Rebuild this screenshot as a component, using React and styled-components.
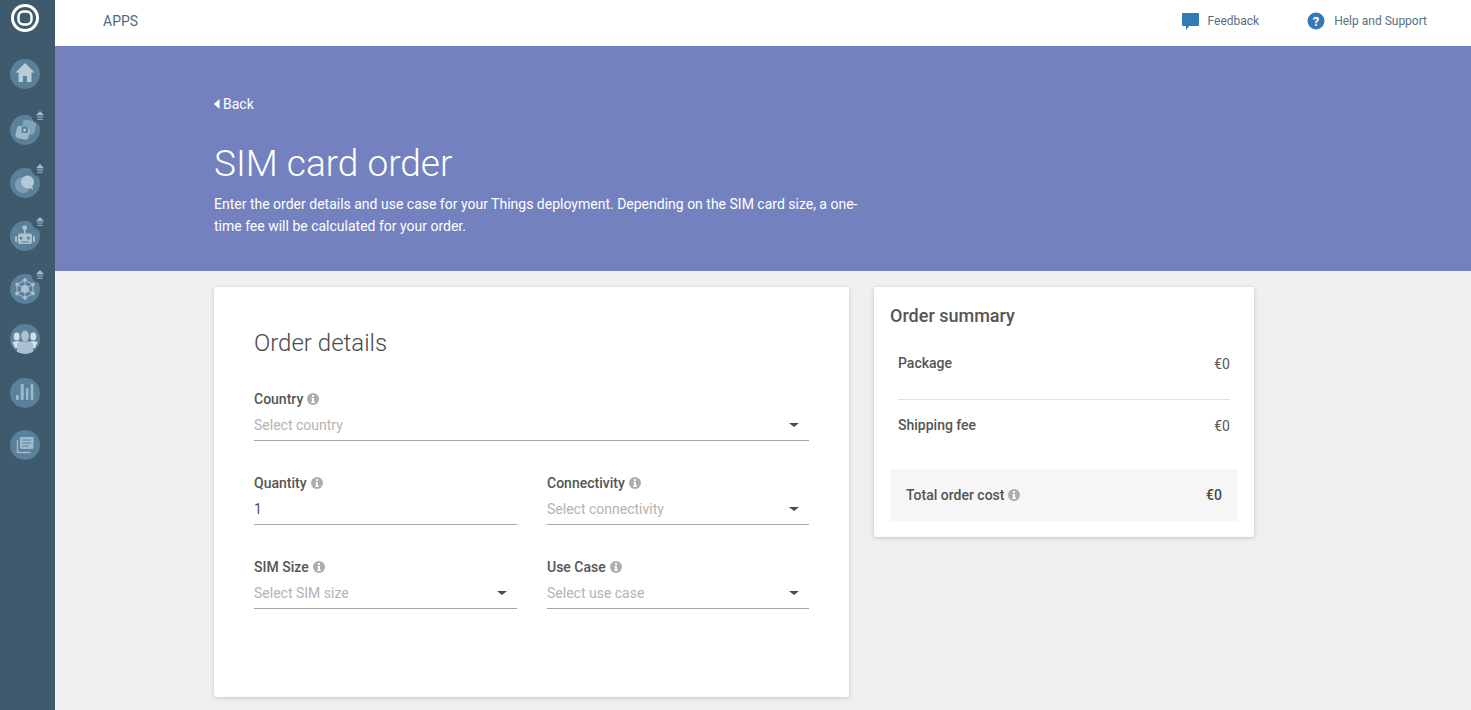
import React from "react";
import styled, { createGlobalStyle } from "styled-components";

const GlobalStyle = createGlobalStyle`
	html, body {
		margin: 0;
		padding: 0;
		height: 100%;
		background: #efefef;
		font-family: Roboto, "Liberation Sans", sans-serif;
		overflow: hidden;
	}
`;

const Page = styled.div`
	display: flex;
	width: 1471px;
	height: 710px;
	overflow: hidden;
`;

const Sidebar = styled.nav`
	width: 55px;
	flex: none;
	background: #3e5a6c;
	display: flex;
	flex-direction: column;
	align-items: flex-start;
	padding: 3px 0 0 10px;
	box-sizing: border-box;
`;

const Logo = styled.div`
	width: 30px;
	height: 30px;
	margin-bottom: 26px;
`;

const NavItem = styled.div`
	position: relative;
	width: 30px;
	height: 30px;
	margin-top: ${(p) => p.$top}px;
`;

const NavCircle = styled.div`
	width: 30px;
	height: 30px;
	border-radius: 50%;
	background: #5b809a;
	overflow: hidden;
`;

const Notch = styled.div`
	position: absolute;
	top: -9px;
	right: -9px;
	width: 18px;
	height: 18px;
	border-radius: 50%;
	background: #3e5a6c;
	display: flex;
	align-items: center;
	justify-content: center;
	color: #a3bdcc;
`;

const Main = styled.div`
	flex: 1;
	display: flex;
	flex-direction: column;
	min-width: 0;
`;

const TopBar = styled.header`
	height: 46px;
	flex: none;
	background: #fff;
	display: flex;
	align-items: center;
	padding: 0 44px 0 48px;
`;

const AppsLabel = styled.div`
	font-size: 14px;
	color: #4f6a7c;
	flex: 1;
	margin-top: -5px;
`;

const TopLink = styled.div`
	display: flex;
	align-items: center;
	gap: 9px;
	font-size: 12px;
	color: #55707f;
	margin-left: 48px;
	margin-top: -4px;
`;

const Hero = styled.section`
	height: 225px;
	flex: none;
	box-sizing: border-box;
	background: #7382bf;
	color: #fff;
	padding: 49px 0 0 159px;
`;

const BackLink = styled.div`
	display: flex;
	align-items: center;
	gap: 3px;
	font-size: 14px;
	line-height: 18px;
`;

const HeroTitle = styled.h1`
	margin: 29px 0 0;
	font-size: 37px;
	line-height: 44px;
	font-weight: 300;
`;

const HeroText = styled.p`
	margin: 7px 0 0;
	width: 650px;
	font-size: 14px;
	line-height: 22px;
`;

const Content = styled.div`
	display: flex;
	align-items: flex-start;
	gap: 25px;
	padding: 16px 0 0 159px;
`;

const Card = styled.div`
	background: #fff;
	border-radius: 2px;
	box-shadow: 0 1px 4px rgba(0, 0, 0, 0.18);
	box-sizing: border-box;
`;

const DetailsCard = styled(Card)`
	width: 635px;
	height: 410px;
	padding: 41px 40px 0;
`;

const DetailsTitle = styled.h2`
	margin: 0 0 33px;
	font-size: 24px;
	line-height: 30px;
	font-weight: 300;
	color: #4a4a4a;
`;

const FormGrid = styled.div`
	display: grid;
	grid-template-columns: 263px 262px;
	column-gap: 30px;
	row-gap: 34px;
`;

const Field = styled.div`
	grid-column: ${(p) => (p.$wide ? "1 / -1" : "auto")};
`;

const FieldLabel = styled.div`
	display: flex;
	align-items: center;
	gap: 4px;
	font-size: 14px;
	line-height: 16px;
	font-weight: 500;
	color: #555;
`;

const InputLine = styled.div`
	display: flex;
	align-items: center;
	justify-content: space-between;
	height: 34px;
	padding-top: 2px;
	box-sizing: border-box;
	border-bottom: 1px solid #a6a6a6;
	font-size: 14px;
	color: ${(p) => (p.$filled ? "#4d4d80" : "#b3b3b3")};
`;

const Caret = styled.span`
	width: 0;
	height: 0;
	margin-right: 10px;
	border-left: 5px solid transparent;
	border-right: 5px solid transparent;
	border-top: 4px solid #4a4a4a;
`;

const SummaryCard = styled(Card)`
	width: 380px;
	height: 250px;
	padding: 17px 16px 16px;
`;

const SummaryTitle = styled.h3`
	margin: 0 0 27px;
	font-size: 18px;
	line-height: 24px;
	font-weight: 500;
	color: #555;
`;

const SummaryRow = styled.div`
	display: flex;
	justify-content: space-between;
	margin: 0 8px;
	padding-bottom: ${(p) => p.$pad}px;
	border-bottom: ${(p) => (p.$divider ? "1px solid #e3e3e3" : "none")};
	margin-bottom: ${(p) => p.$gap}px;
	font-size: 14px;
	line-height: 16px;
	font-weight: 500;
	color: #555;
`;

const SummaryValue = styled.span`
	font-weight: 400;
	margin-top: 1px;
`;

const TotalRow = styled.div`
	display: flex;
	align-items: center;
	justify-content: space-between;
	height: 52px;
	padding: 0 16px;
	background: #f6f6f6;
	font-size: 14px;
	font-weight: 500;
	color: #4a4a4a;
`;

const TotalLabel = styled.span`
	display: flex;
	align-items: center;
	gap: 4px;
	color: #555;
`;

const InfoIcon = () => (
	<svg width="12" height="12" viewBox="0 0 12 12" style={{ flex: "none" }}>
		<circle cx="6" cy="6" r="6" fill="#adadad" />
		<rect x="5" y="2" width="2" height="2" fill="#fff" />
		<path d="M4.5 5h2.5v3.6h.7V10H4.4V8.6H5V6.2h-.5z" fill="#fff" />
	</svg>
);

const HomeGlyph = () => (
	<svg width="30" height="30" viewBox="0 0 30 30" fill="#b8cdd9">
		<path d="M15 4 5.500 13.500H8.500V23H13V17h4v6h4.500V13.500H24.500z" />
	</svg>
);

const SimGlyph = () => (
	<svg width="30" height="30" viewBox="0 0 30 30">
		<rect x="12" y="5.500" width="13.500" height="13.500" rx="3.500" transform="rotate(12 18.750 12.250)" fill="#7fa3b9" />
		<rect x="6" y="11.500" width="13.500" height="12.500" rx="3.500" transform="rotate(12 12.750 17.750)" fill="#9dbacb" />
		<rect x="11.500" y="11.500" width="6.500" height="6.500" rx="1.500" fill="#5b809a" />
		<circle cx="14.700" cy="15" r="1.500" fill="#b4c9d6" />
	</svg>
);

const ChatGlyph = () => (
	<svg width="30" height="30" viewBox="0 0 30 30">
		<circle cx="13" cy="17" r="8" fill="#7d9fb4" />
		<circle cx="17.500" cy="14" r="6.500" fill="#b4c9d6" />
		<path d="M19 19l4 3-1-5z" fill="#b4c9d6" />
	</svg>
);

const RobotGlyph = () => (
	<svg width="30" height="30" viewBox="0 0 30 30" fill="#a9c3d2">
		<circle cx="14.700" cy="6.700" r="2.400" />
		<rect x="13.900" y="8" width="1.600" height="5" />
		<rect x="8" y="12.500" width="14" height="10.500" rx="2" />
		<rect x="5" y="15" width="2" height="6" rx="1" />
		<rect x="23" y="15" width="2" height="6" rx="1" />
		<circle cx="11" cy="17" r="1.500" fill="#5b809a" />
		<circle cx="18.500" cy="17" r="1.500" fill="#5b809a" />
		<rect x="11" y="20.500" width="8" height="1" fill="#5b809a" />
	</svg>
);

const MeshGlyph = () => (
	<svg width="30" height="30" viewBox="0 0 30 30" stroke="#a9c1d0" strokeWidth="1" fill="#a9c1d0">
		<path d="M15 6 23 10.500V19.500L15 24 7 19.500V10.500Z M15 6V12 M15 18V24 M7 10.500 12 13 M23 10.500 18 13 M7 19.500 12 17 M23 19.500 18 17" fill="none" />
		<circle cx="15" cy="15" r="3.600" />
		<circle cx="15" cy="6" r="1.400" />
		<circle cx="23" cy="10.500" r="1.400" />
		<circle cx="23" cy="19.500" r="1.400" />
		<circle cx="15" cy="24" r="1.400" />
		<circle cx="7" cy="19.500" r="1.400" />
		<circle cx="7" cy="10.500" r="1.400" />
	</svg>
);

const PeopleGlyph = () => (
	<svg width="30" height="30" viewBox="0 0 30 30">
		<g fill="#d3e0e8">
			<ellipse cx="6.700" cy="12.500" rx="3" ry="4" />
			<ellipse cx="23.300" cy="12.500" rx="3" ry="4" />
			<path d="M2.300 18c2-1 7-1.200 8.700 0v6H5z" />
			<path d="M27.700 18c-2-1-7-1.200-8.700 0v6h6z" />
		</g>
		<g fill="#a9c1d0">
			<ellipse cx="15" cy="12" rx="4" ry="5.500" />
			<path d="M7 21c0-2.500 3-3.500 8-3.500s8 1 8 3.500v9H7z" />
		</g>
	</svg>
);

const BarsGlyph = () => (
	<svg width="30" height="30" viewBox="0 0 30 30" fill="#9dbacb">
		<rect x="6" y="17" width="2.700" height="5" rx="1" />
		<rect x="10.700" y="6" width="3" height="16" rx="1" />
		<rect x="16" y="10" width="2.400" height="12" rx="1" />
		<rect x="20.700" y="6" width="2.600" height="16" rx="1" />
	</svg>
);

const NewsGlyph = () => (
	<svg width="30" height="30" viewBox="0 0 30 30">
		<path d="M7.500 10v12.500h13" fill="none" stroke="#9dbacb" strokeWidth="1.500" />
		<rect x="10" y="7" width="13.500" height="12" rx="1.200" fill="#9dbacb" />
		<path d="M12.500 10h8.500M12.500 13h8.500M12.500 16h6" stroke="#5b809a" strokeWidth="1.200" />
	</svg>
);

const UploadGlyph = () => (
	<svg width="8" height="9" viewBox="0 0 8 9" fill="currentColor">
		<path d="M4 0 8 4.200H0z" />
		<rect x="1" y="5.400" width="6" height="1" />
		<rect x="1.500" y="7.800" width="5" height="1" />
	</svg>
);

const navItems = [
	{ glyph: <HomeGlyph />, top: 0 },
	{ glyph: <SimGlyph />, top: 26, notch: true },
	{ glyph: <ChatGlyph />, top: 23, notch: true },
	{ glyph: <RobotGlyph />, top: 23, notch: true },
	{ glyph: <MeshGlyph />, top: 23, notch: true },
	{ glyph: <PeopleGlyph />, top: 20 },
	{ glyph: <BarsGlyph />, top: 24 },
	{ glyph: <NewsGlyph />, top: 22 },
];

function App() {
	return (
		<Page>
			<GlobalStyle />
			<Sidebar>
				<Logo>
					<svg width="30" height="30" viewBox="0 0 30 30" fill="none" stroke="#fff">
						<circle cx="15" cy="15" r="12.500" strokeWidth="3" />
						<rect x="8.500" y="8.500" width="13" height="13" rx="5" strokeWidth="2.500" />
					</svg>
				</Logo>
				{navItems.map((item, index) => (
					<NavItem key={index} $top={item.top}>
						<NavCircle>{item.glyph}</NavCircle>
						{item.notch && (
							<Notch>
								<UploadGlyph />
							</Notch>
						)}
					</NavItem>
				))}
			</Sidebar>
			<Main>
				<TopBar>
					<AppsLabel>APPS</AppsLabel>
					<TopLink>
						<svg width="17" height="17" viewBox="0 0 17 17">
							<path d="M1 0h15a1 1 0 0 1 1 1v11a1 1 0 0 1-1 1H7l-3 4v-4H1a1 1 0 0 1-1-1V1a1 1 0 0 1 1-1z" fill="#337ab7" />
						</svg>
						Feedback
					</TopLink>
					<TopLink>
						<svg width="18" height="18" viewBox="0 0 18 18">
							<circle cx="9" cy="9" r="8.500" fill="#337ab7" />
							<text x="9" y="13.500" textAnchor="middle" fontSize="13" fontWeight="700" fill="#fff" fontFamily="Roboto">?</text>
						</svg>
						Help and Support
					</TopLink>
				</TopBar>
				<Hero>
					<BackLink>
						<svg width="6" height="10" viewBox="0 0 6 10">
							<path d="M5.500 0v10L0 5z" fill="#fff" />
						</svg>
						Back
					</BackLink>
					<HeroTitle>SIM card order</HeroTitle>
					<HeroText>
						Enter the order details and use case for your Things deployment. Depending on the SIM card size, a one-time fee will be calculated for your order.
					</HeroText>
				</Hero>
				<Content>
					<DetailsCard>
						<DetailsTitle>Order details</DetailsTitle>
						<FormGrid>
							<Field $wide>
								<FieldLabel>Country <InfoIcon /></FieldLabel>
								<InputLine>Select country<Caret /></InputLine>
							</Field>
							<Field>
								<FieldLabel>Quantity <InfoIcon /></FieldLabel>
								<InputLine $filled>1</InputLine>
							</Field>
							<Field>
								<FieldLabel>Connectivity <InfoIcon /></FieldLabel>
								<InputLine>Select connectivity<Caret /></InputLine>
							</Field>
							<Field>
								<FieldLabel>SIM Size <InfoIcon /></FieldLabel>
								<InputLine>Select SIM size<Caret /></InputLine>
							</Field>
							<Field>
								<FieldLabel>Use Case <InfoIcon /></FieldLabel>
								<InputLine>Select use case<Caret /></InputLine>
							</Field>
						</FormGrid>
					</DetailsCard>
					<SummaryCard>
						<SummaryTitle>Order summary</SummaryTitle>
						<SummaryRow $divider $pad={27} $gap={17}>
							Package
							<SummaryValue>€0</SummaryValue>
						</SummaryRow>
						<SummaryRow $pad={35} $gap={0}>
							Shipping fee
							<SummaryValue>€0</SummaryValue>
						</SummaryRow>
						<TotalRow>
							<TotalLabel>Total order cost <InfoIcon /></TotalLabel>
							<span>€0</span>
						</TotalRow>
					</SummaryCard>
				</Content>
			</Main>
		</Page>
	);
}

export default App;
